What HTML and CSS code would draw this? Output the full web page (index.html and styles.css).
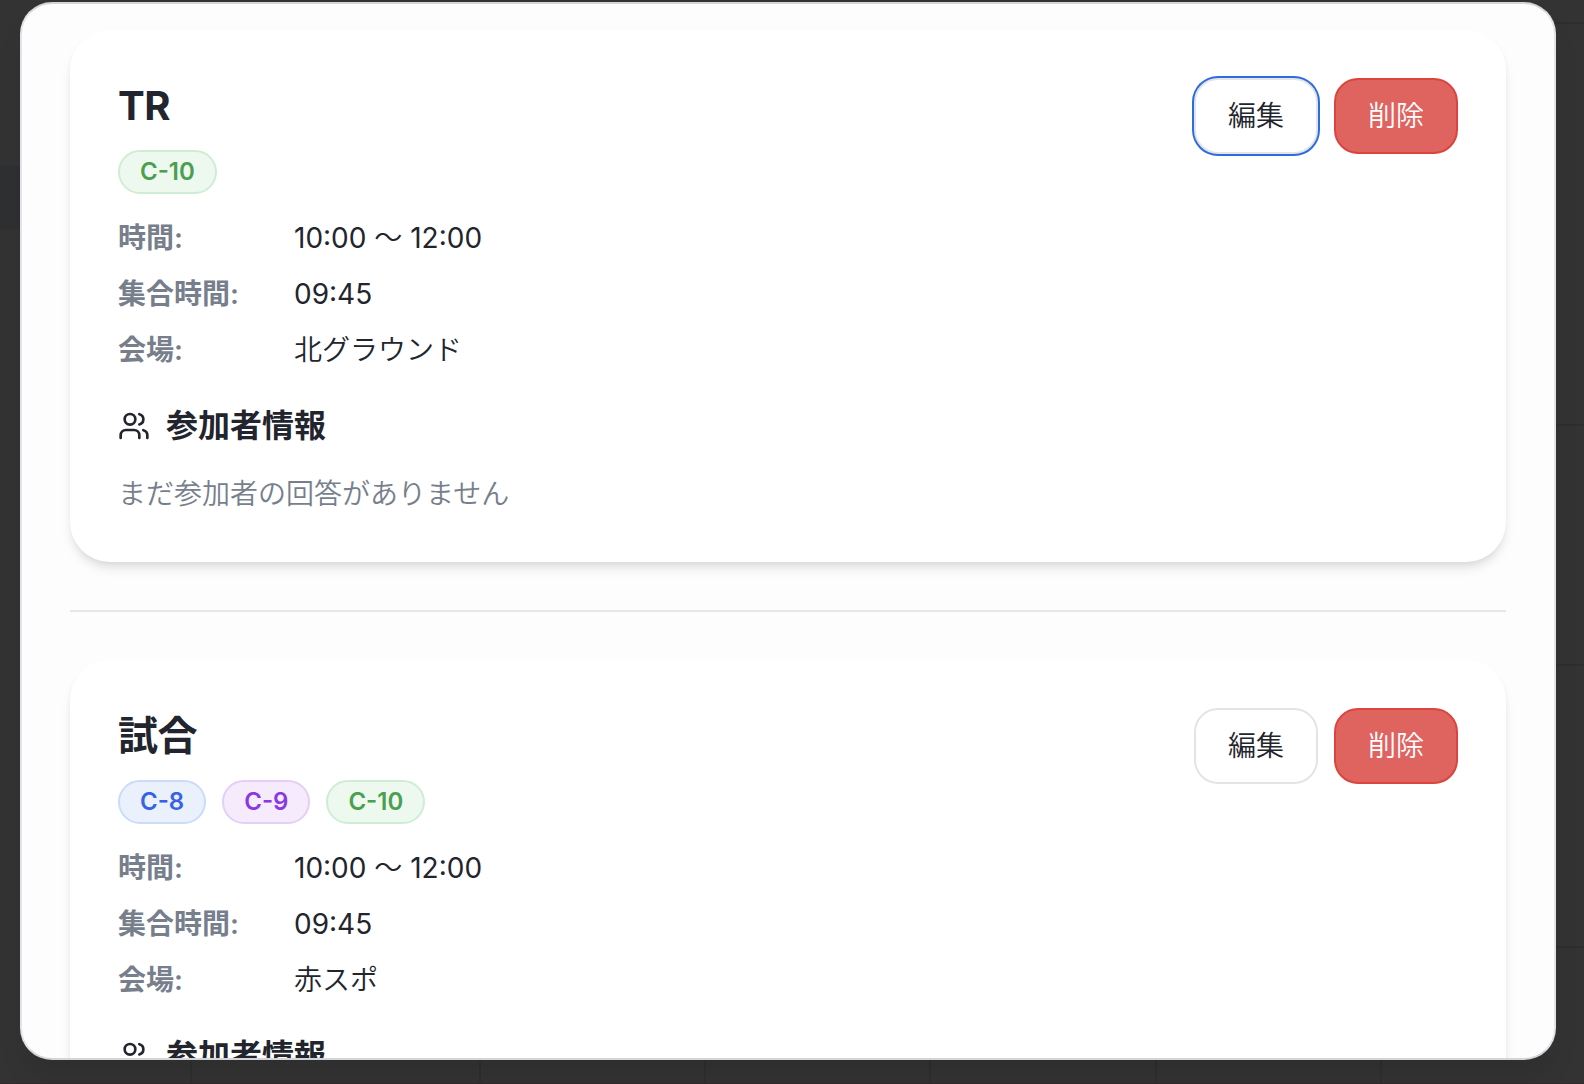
FILE: index.html
```html
<!DOCTYPE html>
<html lang="ja">
<head>
<meta charset="utf-8">
<title>予定</title>
<link rel="stylesheet" href="styles.css">
</head>
<body>
<svg class="backdrop" viewBox="0 0 1584 1084" aria-hidden="true">
  <rect x="0" y="166" width="24" height="64" fill="#2e3032"/>
  <path d="M1556 23H1584M1556 425H1584M1556 665H1584M1556 947H1584M191 1060V1084M480 1060V1084M705 1060V1084M930 1060V1084M1156 1060V1084M1381 1060V1084" stroke="#2e2e2e" stroke-width="2"/>
  <path d="M0 1083.5H1584" stroke="#35282b"/>
</svg>
<main class="modal">
  <article class="card">
    <header class="card-head">
      <div class="summary">
        <h2 class="title">TR</h2>
        <div class="badges"><span class="badge green">C-10</span></div>
      </div>
      <div class="actions">
        <button class="btn focused">編集</button>
        <button class="btn danger">削除</button>
      </div>
    </header>
    <dl class="details">
      <dt>時間:</dt><dd>10:00 <span class="ja">〜</span> 12:00</dd>
      <dt>集合時間:</dt><dd>09:45</dd>
      <dt>会場:</dt><dd class="ja">北グラウンド</dd>
    </dl>
    <h3 class="section-title">
      <svg class="icon" viewBox="0 0 24 24"><path d="M16 21v-2a4 4 0 0 0-4-4H6a4 4 0 0 0-4 4v2"/><circle cx="9" cy="7" r="4"/><path d="M22 21v-2a4 4 0 0 0-3-3.87"/><path d="M16 3.13a4 4 0 0 1 0 7.75"/></svg>
      参加者情報
    </h3>
    <p class="empty">まだ参加者の回答がありません</p>
  </article>
  <hr class="divider">
  <article class="card">
    <header class="card-head">
      <div class="summary">
        <h2 class="title">試合</h2>
        <div class="badges"><span class="badge blue">C-8</span><span class="badge purple">C-9</span><span class="badge green">C-10</span></div>
      </div>
      <div class="actions">
        <button class="btn">編集</button>
        <button class="btn danger">削除</button>
      </div>
    </header>
    <dl class="details">
      <dt>時間:</dt><dd>10:00 <span class="ja">〜</span> 12:00</dd>
      <dt>集合時間:</dt><dd>09:45</dd>
      <dt>会場:</dt><dd class="ja">赤スポ</dd>
    </dl>
    <h3 class="section-title">
      <svg class="icon" viewBox="0 0 24 24"><path d="M16 21v-2a4 4 0 0 0-4-4H6a4 4 0 0 0-4 4v2"/><circle cx="9" cy="7" r="4"/><path d="M22 21v-2a4 4 0 0 0-3-3.87"/><path d="M16 3.13a4 4 0 0 1 0 7.75"/></svg>
      参加者情報
    </h3>
  </article>
</main>
</body>
</html>
```
FILE: styles.css
```css
* { box-sizing: border-box; margin: 0; }
body {
  height: 1084px;
  padding: 2px 28px 24px 20px;
  overflow: hidden;
  background: #333;
  color: #22252d;
  font: 400 28px/40px Inter, "Noto Sans CJK JP", sans-serif;
}
.backdrop { position: absolute; left: 0; top: 0; width: 1584px; height: 1084px; }
.modal {
  position: relative;
  height: 1058px;
  padding: 26px 48px 0;
  overflow: hidden;
  background: #fdfdfd;
  border: 2px solid #e2e4e9;
  border-top-color: #d4d5d9;
  border-bottom-color: #d4d5d9;
  border-radius: 32px;
  box-shadow: 0 20px 30px -6px rgba(0, 0, 0, .1);
}
.card {
  padding: 48px;
  background: #fff;
  border-radius: 40px;
  box-shadow: 0 8px 12px -2px rgba(0, 0, 0, .1), 0 4px 8px -4px rgba(0, 0, 0, .1);
}
.divider { height: 2px; margin: 48px 0; border: 0; background: #e5e7eb; }
.card-head { display: flex; justify-content: space-between; align-items: flex-start; }
.title { font-size: 40px; line-height: 56px; font-weight: 700; letter-spacing: -.4px; }
.badges { display: flex; gap: 16px; margin-top: 16px; }
.badge {
  padding: 4px 20px;
  border: 2px solid;
  border-radius: 22px;
  font-size: 24px;
  line-height: 32px;
  font-weight: 600;
}
.green { color: #4a9f50; background: #edf8ef; border-color: #cfedd4; }
.blue { color: #3762e3; background: #eaf1fd; border-color: #cbdcf9; }
.purple { color: #8a38df; background: #f5ebfd; border-color: #e3cff8; }
.actions { display: flex; gap: 16px; }
.btn {
  height: 76px;
  padding: 0 32px;
  color: inherit;
  background: #fff;
  border: 2px solid #e4e4e5;
  border-radius: 24px;
  font: inherit;
  font-weight: 350;
}
.focused { box-shadow: 0 0 0 2px #2e6be0; }
.danger { color: #fff; background: #df635f; border-color: #db453e; }
.details { display: grid; grid-template-columns: 160px 1fr; gap: 16px; margin-top: 24px; }
dt { color: #777e8c; font-weight: 600; }
dd { margin: 0; }
.ja { font-weight: 350; }
.section-title {
  display: flex;
  align-items: center;
  gap: 16px;
  margin: 32px 0 24px;
  font-size: 32px;
  line-height: 48px;
  font-weight: 600;
}
.icon { width: 32px; height: 32px; fill: none; stroke: currentColor; stroke-width: 2; stroke-linecap: round; stroke-linejoin: round; }
.empty { color: #777e8c; font-weight: 350; }
```
